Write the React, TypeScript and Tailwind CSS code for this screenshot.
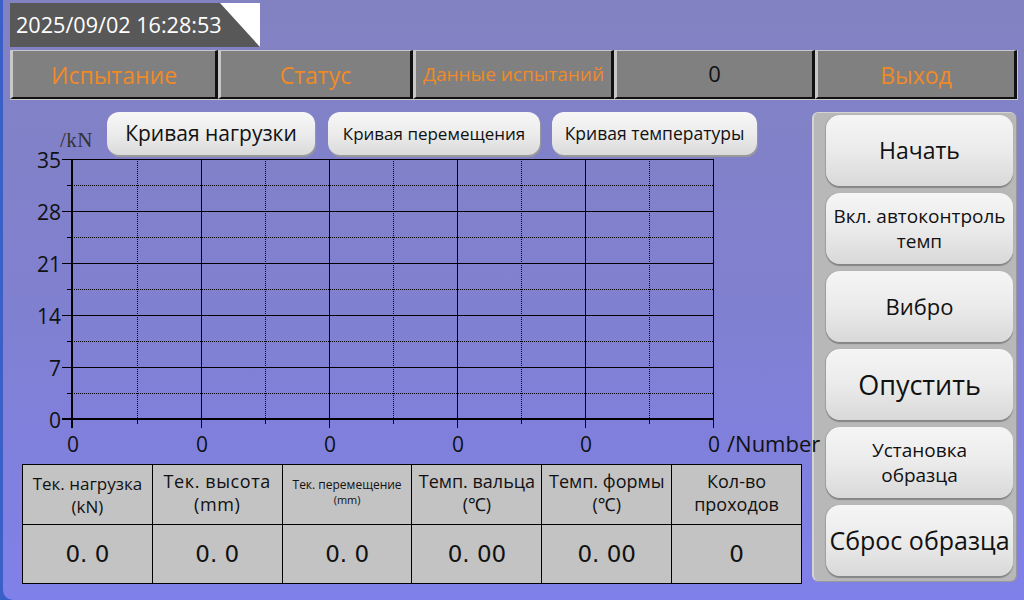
import React from "react";

const majorY = [159, 211, 263, 315, 367];
const minorY = [185, 237, 289, 341, 393];
const majorX = [201, 329, 457, 585, 713];
const minorX = [137, 265, 393, 521, 649];
const yLabels: [string, number][] = [
  ["35", 159],
  ["28", 211],
  ["21", 263],
  ["14", 315],
  ["7", 367],
  ["0", 419],
];
const xLabels = [72, 201, 329, 457, 585, 713];

function Chart() {
  const lf = "Open Sans, Noto Sans, sans-serif";
  return (
    <svg width={809} height={307} viewBox="3 155 809 307" className="block overflow-visible relative z-10">
      {majorY.map((y) => (
        <line key={"my" + y} x1={72} x2={713} y1={y + 0.5} y2={y + 0.5} stroke="#000" strokeWidth={1} />
      ))}
      {minorY.map((y) => (
        <line key={"ny" + y} x1={72} x2={713} y1={y + 0.5} y2={y + 0.5} stroke="#000" strokeWidth={1} strokeDasharray="1 1" />
      ))}
      {majorX.map((x) => (
        <line key={"mx" + x} x1={x + 0.5} x2={x + 0.5} y1={159} y2={419} stroke="#000" strokeWidth={1} />
      ))}
      {minorX.map((x) => (
        <line key={"nx" + x} x1={x + 0.5} x2={x + 0.5} y1={159} y2={419} stroke="#000" strokeWidth={1} strokeDasharray="1 1" />
      ))}
      <line x1={72} x2={72} y1={159} y2={428} stroke="#000" strokeWidth={2} />
      <line x1={62} x2={714} y1={419} y2={419} stroke="#000" strokeWidth={2} />
      {majorY.map((y) => (
        <line key={"lt" + y} x1={62} x2={72} y1={y + 0.5} y2={y + 0.5} stroke="#000" strokeWidth={1} />
      ))}
      {minorY.map((y) => (
        <line key={"lnt" + y} x1={67} x2={72} y1={y + 0.5} y2={y + 0.5} stroke="#000" strokeWidth={1} />
      ))}
      {majorX.map((x) => (
        <line key={"bt" + x} x1={x + 0.5} x2={x + 0.5} y1={419} y2={428} stroke="#000" strokeWidth={1} />
      ))}
      {minorX.map((x) => (
        <line key={"bnt" + x} x1={x + 0.5} x2={x + 0.5} y1={419} y2={424} stroke="#000" strokeWidth={1} />
      ))}
      {yLabels.map(([t, y]) => (
        <text key={"yl" + t} x={61} y={y + 9} textAnchor="end" fontSize={21} fontFamily={lf} fill="#111">
          {t}
        </text>
      ))}
      {xLabels.map((x) => (
        <text key={"xl" + x} x={x + 1} y={452} textAnchor="middle" fontSize={21} fontFamily={lf} fill="#111">
          0
        </text>
      ))}
      <text x={727} y={452} fontSize={22} fontFamily={lf} fill="#111">
        /Number
      </text>
    </svg>
  );
}

function Tab({ w, children, cls }: { w: string; children: React.ReactNode; cls?: string }) {
  return (
    <div
      className={`${w} h-[49px] bg-[#808080] border-t border-l-[3px] border-r-[3px] border-b-[2px] border-t-[#c8c8c8] border-l-[#c8c8c8] border-r-[#111] border-b-[#111] flex items-center justify-center pt-[3px] whitespace-nowrap ${cls ?? ""}`}
    >
      {children}
    </div>
  );
}

function SideButton({ children, cls }: { children: React.ReactNode; cls?: string }) {
  return (
    <div
      className={`h-[71px] rounded-[14px] bg-gradient-to-b from-[#f5f5f5] via-[#ebebeb] to-[#d9d9d9] shadow-[0_2px_1px_#858585,-1px_0_1px_#a0a0a0] flex items-center justify-center text-center text-[#111] leading-[25px] whitespace-nowrap ${cls ?? ""}`}
    >
      {children}
    </div>
  );
}

function ChartButton({ w, children, cls }: { w: string; children: React.ReactNode; cls?: string }) {
  return (
    <div
      className={`${w} h-[43px] rounded-[12px] bg-gradient-to-b from-[#f7f7f7] via-[#ececec] to-[#dadada] shadow-[1px_2px_1px_#9a9a9a] flex items-center justify-center text-[#111] whitespace-nowrap ${cls ?? ""}`}
    >
      {children}
    </div>
  );
}

const headCell = "border-r border-b border-black flex flex-col items-center justify-center text-[#111] leading-[23px] whitespace-nowrap";
const valCell = "border-r border-b border-black flex items-center justify-center text-[#111] font-['DejaVu_Sans',sans-serif] text-[23px]";

export default function App() {
  return (
    <div className="w-[1024px] h-[600px] flex bg-[#3a5fc6] overflow-hidden">
      <div className="ml-[3px] w-[1021px] h-[600px] flex flex-col rounded-bl-[10px] bg-gradient-to-b from-[#8282c2] via-[#8080d0] to-[#8080ea] font-['Open_Sans','Noto_Sans',sans-serif]">
        {/* timestamp */}
        <div className="mt-[3px] ml-[7px] w-[250px] h-[44px] bg-white">
          <div className="w-full h-full bg-[#585858] [clip-path:polygon(0_0,84%_0,100%_100%,0_100%)] flex items-center pl-[6px] text-white text-[21.6px]">
            2025/09/02 16:28:53
          </div>
        </div>
        {/* tabs */}
        <div className="mt-[3px] ml-[7px] w-[1008px] h-[50px] flex bg-[#c8c8c8]">
          <Tab w="w-[208px]" cls="text-[#f08a26] text-[23px]">Испытание</Tab>
          <Tab w="w-[195px]" cls="text-[#f08a26] text-[23px]">Статус</Tab>
          <Tab w="w-[201px]" cls="text-[#f08a26] text-[19px] pb-[3px]">Данные испытаний</Tab>
          <Tab w="w-[201px]" cls="text-[#111] text-[22px] pb-[5px]">0</Tab>
          <Tab w="w-[202px]" cls="text-[#f08a26] text-[23px]">Выход</Tab>
        </div>
        {/* main */}
        <div className="flex">
          <div className="w-[809px] flex flex-col">
            <div className="mt-[12px] h-[43px] flex">
              <div className="ml-[57px] w-[47px] mt-[17px] text-[21px] leading-[22px] text-[#333] font-['Liberation_Serif',serif] tracking-[0.5px]">
                /kN
              </div>
              <ChartButton w="w-[208px]" cls="text-[21px]">Кривая нагрузки</ChartButton>
              <ChartButton w="w-[212px] ml-[13px]" cls="text-[17px]">Кривая перемещения</ChartButton>
              <ChartButton w="w-[205px] ml-[12px]" cls="text-[17.5px]">Кривая температуры</ChartButton>
            </div>
            <Chart />
            <div className="mt-[2px] ml-[19px] w-[780px] grid grid-cols-6 grid-rows-[60px_59px] border-l border-t border-black bg-[#c3c3c3]">
              <div className={`${headCell} text-[17px]`}>
                <span>Тек. нагрузка</span>
                <span>(kN)</span>
              </div>
              <div className={`${headCell} text-[18px] tracking-[0.6px] pb-[4px]`}>
                <span>Тек. высота</span>
                <span>(mm)</span>
              </div>
              <div className={`${headCell} pb-[6px]`}>
                <span className="text-[12px] leading-[17px]">Тек. перемещение</span>
                <span className="text-[11px] leading-[14px]">(mm)</span>
              </div>
              <div className={`${headCell} text-[18px] pb-[4px]`}>
                <span>Темп. вальца</span>
                <span>(℃)</span>
              </div>
              <div className={`${headCell} text-[18px] pb-[4px]`}>
                <span>Темп. формы</span>
                <span>(℃)</span>
              </div>
              <div className={`${headCell} text-[18px] pb-[4px]`}>
                <span>Кол-во</span>
                <span>проходов</span>
              </div>
              <div className={valCell}>0. 0</div>
              <div className={valCell}>0. 0</div>
              <div className={valCell}>0. 0</div>
              <div className={valCell}>0. 00</div>
              <div className={valCell}>0. 00</div>
              <div className={valCell}>0</div>
            </div>
          </div>
          {/* right panel */}
          <div className="mt-[12px] w-[204px] h-[469px] rounded-[6px] bg-[#b8b8b8] border-l-2 border-t border-[#d4d4d4] shadow-[1px_1px_1px_#9a9a9a] flex flex-col gap-[7px] pl-[12px] pr-[3px] pt-[2px]">
            <SideButton cls="text-[23px]">Начать</SideButton>
            <SideButton cls="text-[19px]">
              Вкл. автоконтроль
              <br />
              темп
            </SideButton>
            <SideButton cls="text-[22px]">Вибро</SideButton>
            <SideButton cls="text-[27px]">Опустить</SideButton>
            <SideButton cls="text-[19px]">
              Установка
              <br />
              образца
            </SideButton>
            <SideButton cls="text-[25px]">Сброс образца</SideButton>
          </div>
        </div>
      </div>
    </div>
  );
}
